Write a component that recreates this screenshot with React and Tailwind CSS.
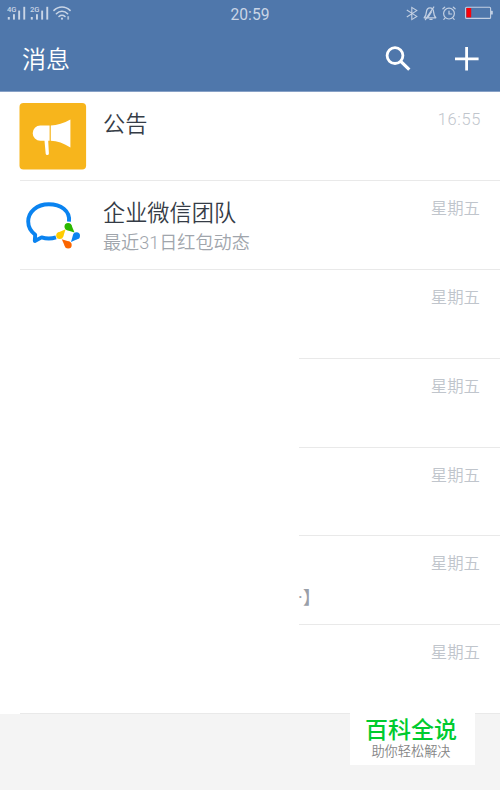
import React from 'react';

const messages = [
    { id: 1, title: '公告', time: '16:55', avatar: 'notice' },
    { id: 2, title: '企业微信团队', desc: '最近31日红包动态', time: '星期五', avatar: 'team' },
    { id: 3, time: '星期五' },
    { id: 4, time: '星期五' },
    { id: 5, time: '星期五' },
    { id: 6, time: '星期五', tail: '·】' },
    { id: 7, time: '星期五', fullLine: true },
];

const Signal = ({ label }) => (
    <svg width="20" height="15" viewBox="0 0 20 15" fill="#c9d5e6">
        <text x="0" y="5.8" fontSize="7.8" fontWeight="500" textLength="9.5" lengthAdjust="spacingAndGlyphs" fontFamily="Roboto, sans-serif">{label}</text>
        <rect x=".8" y="11" width="2" height="2.6" />
        <rect x="6" y="8.2" width="1.9" height="5.4" />
        <rect x="11.2" y="4.6" width="1.9" height="9" />
        <rect x="16.3" y=".8" width="1.9" height="12.8" />
    </svg>
);

const StatusBar = () => (
    <div className="flex h-[26px] items-center justify-between pr-[7px] pl-[7px]">
        <div className="flex w-[200px] items-center">
            <Signal label="4G" />
            <span className="w-[3px]"></span>
            <Signal label="2G" />
            <svg className="ml-[3px]" width="18" height="15" viewBox="0 0 18 15" fill="none" stroke="#c9d5e6" strokeWidth="1.6" strokeLinecap="round">
                <path d="M1 4.4C5.5-.2 12.5-.2 17 4.4" />
                <path d="M3.4 7.7c3.1-3.2 8.1-3.2 11.2 0" />
                <path d="M6 10.5c1.7-1.6 4.3-1.6 6 0" />
                <circle cx="9" cy="12.7" r="1.1" fill="#c9d5e6" stroke="none" />
                <path d="M15.2 10.2v3.4" strokeWidth="1.8" opacity=".75" strokeLinecap="butt" />
            </svg>
        </div>
        <span className="pt-[3px] text-[15.6px] leading-6 text-[#c9d5e6]">20:59</span>
        <div className="flex w-[200px] items-center justify-end">
            <svg width="12" height="15" viewBox="0 0 12 15" fill="none" stroke="#c3d0e3" strokeWidth="1.1">
                <path d="M.8 4l10 6.4-5 3.2V1.4l5 3.2L.8 11" />
            </svg>
            <svg className="ml-[5px]" width="14" height="15" viewBox="0 0 14 15" fill="none" stroke="#c3d0e3" strokeWidth="1.3" strokeLinecap="round" strokeLinejoin="round">
                <path d="M1.2 11.8h11.6C11 10 10.8 8.4 10.6 6 10.4 3.4 9.3 1.8 7 1.8S3.6 3.4 3.4 6C3.2 8.4 3 10 1.2 11.8z" />
                <path d="M10.8 1L2.4 13.6M8.4 6l-3.6 5.6M7 13.4h2" />
            </svg>
            <svg className="ml-[5px]" width="14" height="15" viewBox="0 0 14 15" fill="none" stroke="#c3d0e3" strokeWidth="1.2" strokeLinecap="round">
                <circle cx="7" cy="7.6" r="5.4" />
                <path d="M7 5v3h2.6M.9 2.8l1.8-1.6M13.1 2.8l-1.8-1.6M2.8 12.4l-1 1M11.2 12.4l1 1" />
            </svg>
            <svg className="ml-[9px]" width="28" height="14" viewBox="0 0 28 14">
                <rect x=".6" y="1.2" width="25" height="11.2" rx="1" fill="none" stroke="#c3d0e3" strokeWidth="1.1" />
                <rect x="25.8" y="4.8" width="2" height="3.8" rx=".6" fill="#c3d0e3" />
                <rect x="1.4" y="2" width="4.8" height="9.4" fill="#fb0007" />
            </svg>
        </div>
    </div>
);

const NoticeAvatar = () => (
    <svg className="-ml-px" width="68" height="67" viewBox="0 0 68 67">
        <rect x=".5" width="66.6" height="66.5" rx="4" fill="#f7b51c" />
        <path d="M30.6 22.6v15.2h-1.4l.7 12.4a1.6 1.6 0 0 1-3.2.5l-1.2-12.9h-4.2a7.6 7.6 0 0 1 0-15.2z" fill="#fff" />
        <path d="M31.8 22.6C38 22.3 45 20.4 51.4 16.6v28C45 40.2 38 37.9 31.8 37.7z" fill="#fff" />
    </svg>
);

const TeamAvatar = () => (
    <svg width="67" height="67" viewBox="0 0 67 67">
        <path d="M49 29.6C50.2 18.6 40.6 12.2 28.8 12.2 17 12.2 8.2 19.8 8.2 29.6c0 5.6 2.6 9.8 7 13.2L14.8 49l6.8-3.6c4.8 1.5 9.6 1.5 14.4 0" fill="none" stroke="#0a83f0" strokeWidth="3.9" strokeLinejoin="round" />
        <circle cx="48.1" cy="34.6" r="3.6" fill="#2cb800" />
        <path d="M51.4 33l3.1 7.6-8-2.7z" fill="#2cb800" />
        <circle cx="56.5" cy="43.7" r="3.5" fill="#0a83f0" />
        <path d="M58.2 46.8l-7.2 3.2 2.2-7.8z" fill="#0a83f0" />
        <circle cx="48.2" cy="53" r="3.5" fill="#fb6500" />
        <path d="M45 54.6l-3.2-7.4 8 2.6z" fill="#fb6500" />
        <circle cx="39.7" cy="43.5" r="3.5" fill="#ffcc00" />
        <path d="M38.2 40.4l7.4-3.2-2.5 7.7z" fill="#ffcc00" />
    </svg>
);

const MessageRow = ({ item }) => {
    if (!item.avatar) {
        return (
            <div className={`flex h-[88.9px] border-b border-[#e9e9e9] pr-5 ${item.fullLine ? 'ml-5 pl-[279px]' : 'ml-[299px]'}`}>
                <div className="flex-1 pt-[49px]">
                    {item.tail && <span className="-ml-[1px] block text-[18px] leading-[26px] text-[#9aa0a8]">{item.tail}</span>}
                </div>
                <span className="pt-[16px] text-[16.4px] leading-6 font-[350] text-[#c0c5cc]">{item.time}</span>
            </div>
        );
    }
    return (
        <div className="ml-5 flex h-[88.9px] border-b border-[#e9e9e9] pt-[11px] pr-5">
            {item.avatar === 'notice' ? <NoticeAvatar /> : <TeamAvatar />}
            <div className="ml-4 flex-1 pt-[5px]">
                <div className="text-[22.2px] leading-8 font-[350] text-[#353c46]">{item.title}</div>
                {item.desc && <div className="text-[18.1px] leading-7 font-[350] text-[#a0a5ac]">{item.desc}</div>}
            </div>
            <span className={`text-[16.4px] leading-6 font-[350] text-[#c0c5cc] ${item.id === 1 ? '-mr-px pt-[5px] tracking-[0.7px]' : 'pt-[5px]'}`}>{item.time}</span>
        </div>
    );
};

const App = () => (
    <div className="relative h-[790px] w-[500px] overflow-hidden bg-[#f4f4f4] font-['Roboto','Noto_Sans_CJK_SC',sans-serif]">
        <header className="h-[92px] border-b border-[#86a0c6] bg-[#4f77ab]">
            <StatusBar />
            <div className="flex h-[65px] items-center justify-between pr-[21px] pl-[22px]">
                <h1 className="pt-[3px] text-[24px] leading-9 font-[350] text-white">消息</h1>
                <div className="flex items-center">
                    <svg width="26" height="25" viewBox="0 0 26 25" fill="none" stroke="#fff" strokeWidth="2.8">
                        <circle cx="10" cy="9.6" r="7.9" />
                        <path d="M15.5 15.1l8.8 8.6" strokeWidth="3.2" />
                    </svg>
                    <svg className="ml-[44px]" width="24" height="24" viewBox="0 0 24 24" stroke="#fff" strokeWidth="2.8">
                        <path d="M11.6 0v23.6M0 11.8h23.6" />
                    </svg>
                </div>
            </div>
        </header>

        <main className="bg-white">
            {messages.map(item => (
                <MessageRow key={item.id} item={item} />
            ))}
        </main>

        <div className="absolute top-[713px] left-[350px] flex h-[52px] w-[125px] flex-col items-center bg-white pt-px pr-[3px]">
            <span className="text-[23px] leading-[34px] font-medium text-[#00cb2f]">百科全说</span>
            <span className="-mt-[5px] text-[13.2px] leading-[18px] font-[350] text-[#858585]">助你轻松解决</span>
        </div>
    </div>
);

export default App;
